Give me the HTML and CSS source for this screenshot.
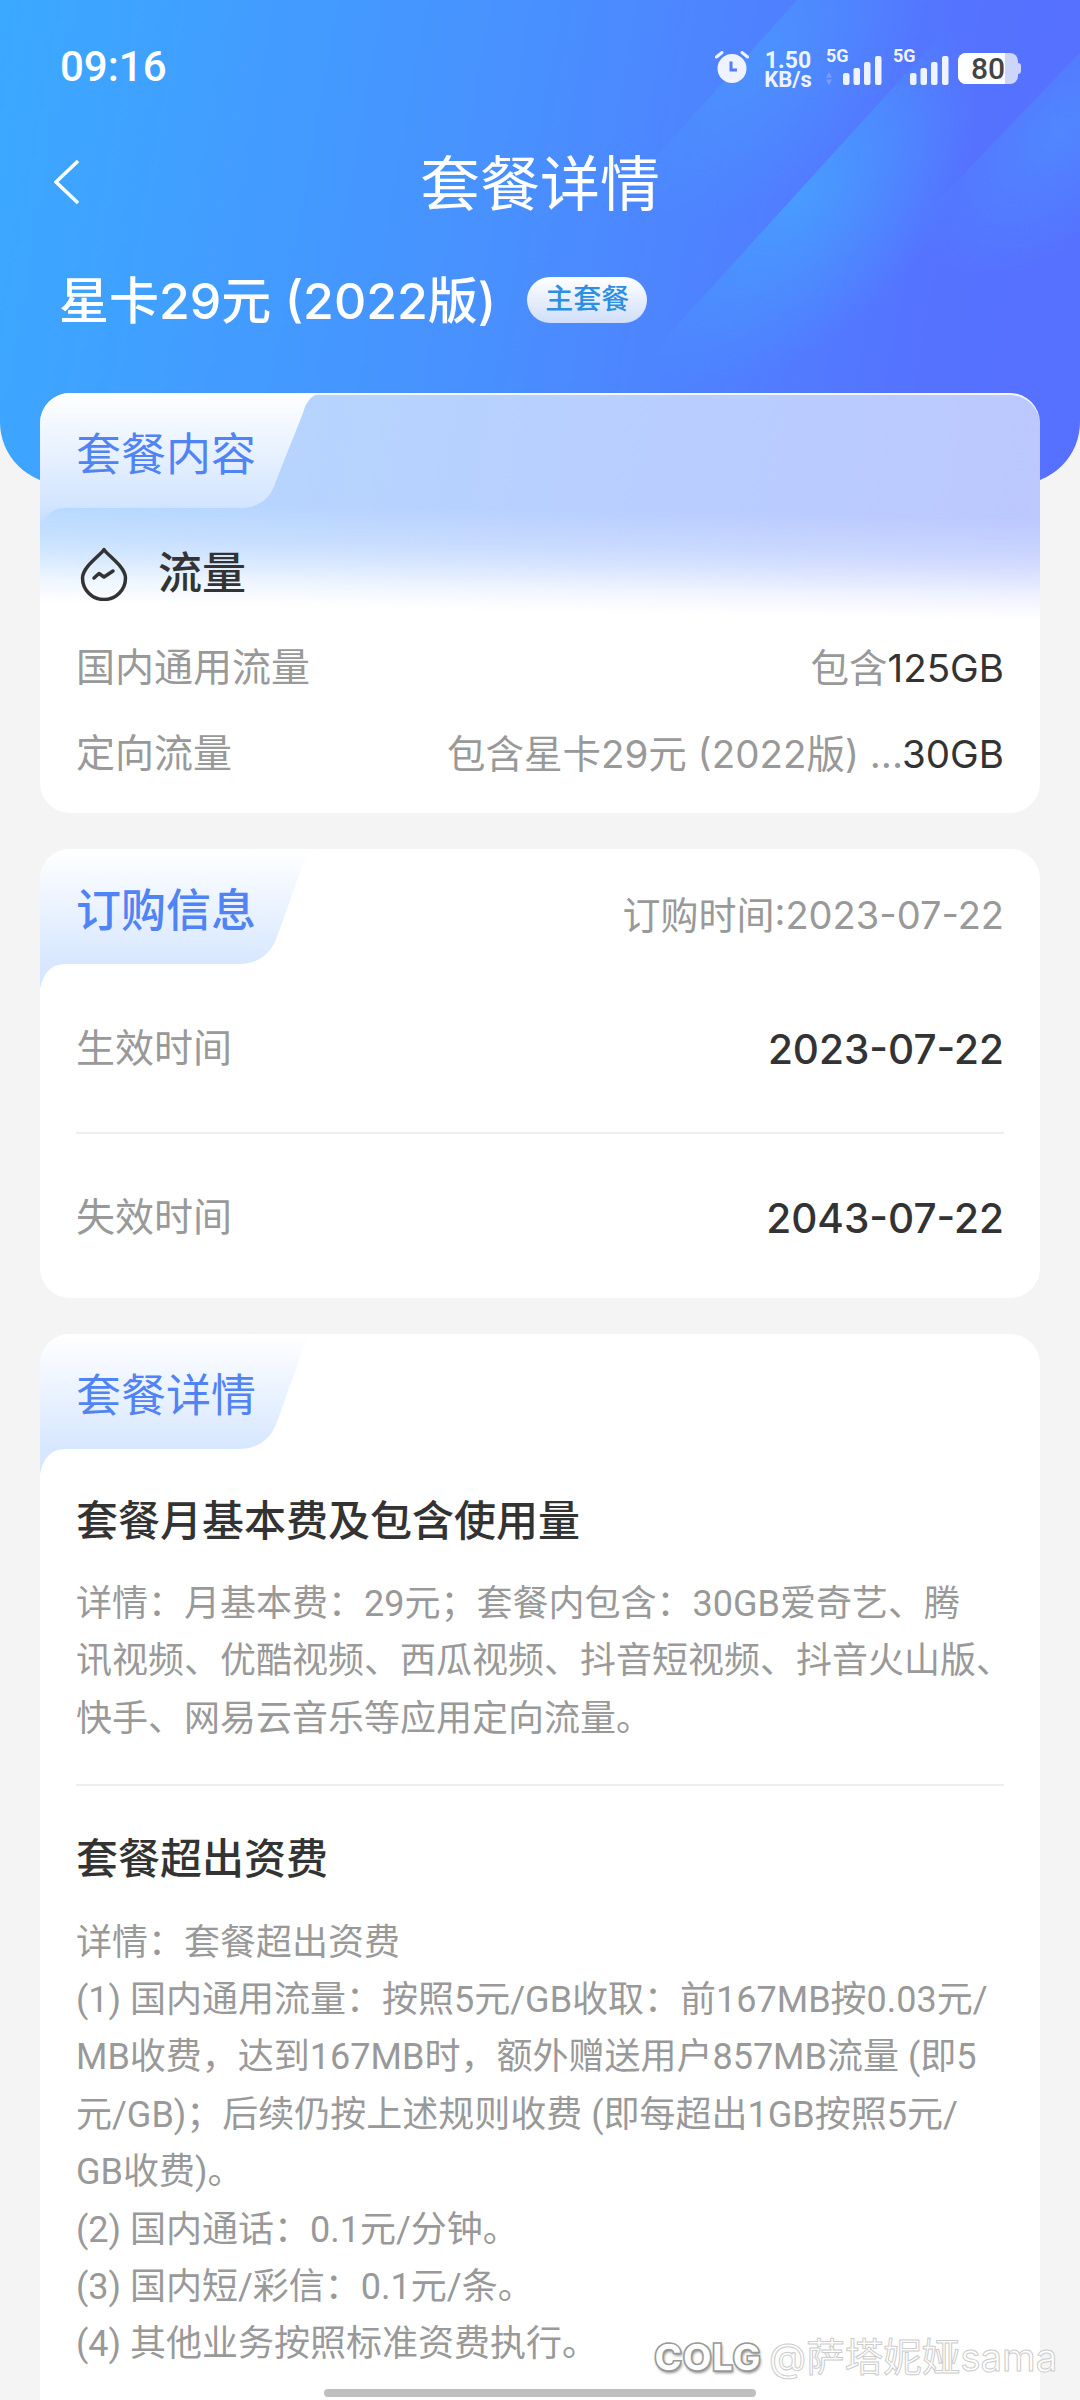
FILE: index.html
```html
<!DOCTYPE html>
<html lang="zh-CN">
<head>
<meta charset="utf-8">
<title>套餐详情</title>
<link rel="stylesheet" href="styles.css">
</head>
<body>
<div class="page">
  <header class="hero">
    <svg class="hero-art" viewBox="0 0 1080 484" aria-hidden="true">
      <defs>
        <radialGradient id="bandA" gradientUnits="userSpaceOnUse" cx="0" cy="0" r="1" gradientTransform="translate(760 50) rotate(-47) scale(200 130)"><stop offset="0" stop-color="#4a9cff" stop-opacity=".6"/><stop offset="1" stop-color="#4a9cff" stop-opacity="0"/></radialGradient>
        <radialGradient id="bandB" gradientUnits="userSpaceOnUse" cx="0" cy="0" r="1" gradientTransform="translate(795 195) rotate(-47) scale(225 135)"><stop offset="0" stop-color="#489cff"/><stop offset=".4" stop-color="#489cff" stop-opacity=".6"/><stop offset="1" stop-color="#489cff" stop-opacity="0"/></radialGradient>
        <radialGradient id="bandC" gradientUnits="userSpaceOnUse" cx="0" cy="0" r="1" gradientTransform="translate(1060 130) rotate(-47) scale(180 100)"><stop offset="0" stop-color="#4a9cff" stop-opacity=".5"/><stop offset="1" stop-color="#4a9cff" stop-opacity="0"/></radialGradient>
      </defs>
      <polygon points="797,0 1200,0 1200,484 500,330" fill="url(#bandA)"/>
      <polygon points="1000,-30 1300,-30 1300,484 560,454" fill="url(#bandB)"/>
      <polygon points="1130,0 1300,0 1300,484 700,450" fill="url(#bandC)"/>
    </svg>
    <div class="status">
      <span class="clock">09:16</span>
      <div class="status-icons">
        <svg class="alarm" viewBox="0 0 34 34" aria-hidden="true">
          <circle cx="17" cy="18.500" r="14.500" fill="#eef3ff"/>
          <path d="M1.500 7 7 2.500M32.500 7 27 2.500" stroke="#eef3ff" stroke-width="3" stroke-linecap="round" fill="none"/>
          <path d="M16 11.500v8.500h6" stroke="#4f7dff" stroke-width="3" fill="none"/>
        </svg>
        <div class="speed"><span class="speed-num">1.50</span><span>KB/s</span></div>
        <div class="sim">
          <span class="net">5G</span>
          <svg class="signal" viewBox="0 0 56 36" aria-hidden="true">
            <path d="M0 27.500 3 22l3 5.500ZM0 29.500 3 35l3-5.500Z" fill="#7d9bff"/>
            <rect x="17" y="23" width="6.500" height="12" rx="2" fill="#eef3ff"/>
            <rect x="27.500" y="18" width="6.500" height="17" rx="2" fill="#eef3ff"/>
            <rect x="38" y="12" width="6.500" height="23" rx="2" fill="#eef3ff"/>
            <rect x="49" y="6" width="6.500" height="29" rx="2" fill="#eef3ff"/>
          </svg>
        </div>
        <div class="sim">
          <span class="net">5G</span>
          <svg class="signal" viewBox="0 0 56 36" aria-hidden="true">
            <rect x="17" y="23" width="6.500" height="12" rx="2" fill="#eef3ff"/>
            <rect x="27.500" y="18" width="6.500" height="17" rx="2" fill="#eef3ff"/>
            <rect x="38" y="12" width="6.500" height="23" rx="2" fill="#eef3ff"/>
            <rect x="49" y="6" width="6.500" height="29" rx="2" fill="#eef3ff"/>
          </svg>
        </div>
        <div class="battery"><span class="battery-fill"></span><span class="battery-num">80</span></div>
      </div>
    </div>
    <nav class="nav">
      <svg class="back" viewBox="0 0 26 46" aria-hidden="true"><path d="M24 2 2 23l22 21" fill="none" stroke="#fff" stroke-width="3.500"/></svg>
      <h1 class="nav-title">套餐详情</h1>
    </nav>
    <div class="plan">
      <span class="plan-name">星卡29元 (2022版)</span>
      <span class="pill">主套餐</span>
    </div>
  </header>

  <main class="cards">
    <section class="card card-usage">
      <svg class="tab" viewBox="0 0 300 140" aria-hidden="true">
        <defs><linearGradient id="tabA" x1="0" y1="0" x2="0" y2="1"><stop offset="0" stop-color="#fff"/><stop offset=".8" stop-color="#d3e5ff"/><stop offset="1" stop-color="#b9d9ff"/></linearGradient></defs>
        <path d="M0 0H285Q268 0 263 20L236 88Q228 115 200 115H25Q5 115 0 140Z" fill="url(#tabA)"/>
      </svg>
      <div class="card-head"><h2 class="card-title">套餐内容</h2></div>
      <div class="usage-head">
        <svg class="drop" viewBox="0 0 48 54" aria-hidden="true">
          <path d="M24 2.500C27 8 45 19 45.500 31A21.500 21.500 0 0 1 2.500 31C3 19 21 8 24 2.500Z" fill="none" stroke="#333" stroke-width="3.500" stroke-linejoin="round"/>
          <path d="M14 31l5-4.500 5 3.500 9-6" fill="none" stroke="#333" stroke-width="3.500" stroke-linecap="round" stroke-linejoin="round"/>
        </svg>
        <span class="usage-name">流量</span>
      </div>
      <div class="usage-row"><span class="muted">国内通用流量</span><span class="muted value">包含<b class="strong">125GB</b></span></div>
      <div class="usage-row"><span class="muted">定向流量</span><span class="muted value">包含星卡29元 (2022版) ...<b class="strong">30GB</b></span></div>
    </section>

    <section class="card card-order">
      <svg class="tab" viewBox="0 0 300 140" aria-hidden="true">
        <defs><linearGradient id="tabB" x1="0" y1="0" x2="0" y2="1"><stop offset="0" stop-color="#fff"/><stop offset=".82" stop-color="#d7e7ff"/></linearGradient></defs>
        <path d="M0 0H280Q267 0 262 18L237 88Q227 115 198 115H25Q5 115 0 140Z" fill="url(#tabB)"/>
      </svg>
      <div class="card-head"><h2 class="card-title heavy">订购信息</h2><span class="muted order-time">订购时间:2023-07-22</span></div>
      <div class="date-row"><span class="muted">生效时间</span><span class="date">2023-07-22</span></div>
      <div class="date-row second"><span class="muted">失效时间</span><span class="date">2043-07-22</span></div>
    </section>

    <section class="card card-detail">
      <svg class="tab" viewBox="0 0 300 140" aria-hidden="true">
        <path d="M0 0H280Q267 0 262 18L237 88Q227 115 198 115H25Q5 115 0 140Z" fill="url(#tabB)"/>
      </svg>
      <div class="card-head"><h2 class="card-title">套餐详情</h2></div>
      <div class="detail first">
        <h3 class="detail-title">套餐月基本费及包含使用量</h3>
        <p class="detail-text">详情&#65306;月基本费&#65306;29元&#65307;套餐内包含&#65306;30GB爱奇艺、腾<br>讯视频、优酷视频、西瓜视频、抖音短视频、抖音火山版、<br>快手、网易云音乐等应用定向流量。</p>
      </div>
      <div class="detail">
        <h3 class="detail-title">套餐超出资费</h3>
        <p class="detail-text">详情&#65306;套餐超出资费<br>(1) 国内通用流量&#65306;按照5元/GB收取&#65306;前167MB按0.03元/<br>MB收费&#65292;达到167MB时&#65292;额外赠送用户857MB流量 (即5<br>元/GB)&#65307;后续仍按上述规则收费 (即每超出1GB按照5元/<br>GB收费)。<br>(2) 国内通话&#65306;0.1元/分钟。<br>(3) 国内短/彩信&#65306;0.1元/条。<br>(4) 其他业务按照标准资费执行。</p>
      </div>
    </section>
  </main>

  <div class="watermark"><span class="wm-logo">COLG</span><span class="wm-text">@萨塔妮娅sama</span></div>
  <div class="home-bar"></div>
</div>
</body>
</html>
```
FILE: styles.css
```css
* { box-sizing: border-box; }
html, body { margin: 0; padding: 0; height: 2400px; overflow: hidden; }
body { background: #f4f4f4; font-family: Roboto, "Noto Sans CJK SC", sans-serif; color: #333; }
h1, h2, h3, p { margin: 0; font-weight: 400; }
b { font-weight: 400; }

.page { position: relative; width: 1080px; height: 2400px; overflow: hidden; }

.hero { position: relative; height: 484px; padding: 0 60px; color: #fff; overflow: hidden;
  border-radius: 0 0 62px 62px;
  background: linear-gradient(100deg, #3ba9ff 0%, #4891ff 45%, #5572ff 85%, #5670ff 100%); }
.hero-art { position: absolute; left: 0; top: 0; width: 1080px; height: 484px; }

.status { position: relative; height: 134px; padding-top: 46px; display: flex; justify-content: space-between; align-items: flex-start; }
.clock { font-size: 42px; line-height: 42px; font-weight: 500; }
.status-icons { display: flex; align-items: flex-start; margin-top: 4px; color: #eef3ff; }
.alarm { width: 34px; height: 34px; flex: none; margin-right: 13px; }
.speed { display: flex; flex-direction: column; align-items: center; width: 52px; margin-right: 12px; font-size: 22px; line-height: 17px; font-weight: 700; }
.speed-num { font-size: 23px; line-height: 21px; }
.sim { position: relative; width: 56px; height: 36px; flex: none; margin-right: 11px; }
.sim + .sim { margin-right: 9px; }
.net { position: absolute; left: 0; top: -3px; font-size: 18px; line-height: 18px; font-weight: 700; }
.signal { position: absolute; left: 0; top: 0; width: 56px; height: 36px; }
.battery { position: relative; width: 60px; height: 31px; flex: none; margin: 3px 2px 0 0; border-radius: 8px; background: #cdd5fb; }
.battery::after { content: ""; position: absolute; right: -3px; top: 10px; width: 3px; height: 11px; border-radius: 0 3px 3px 0; background: #cdd5fb; }
.battery-fill { position: absolute; left: 0; top: 0; bottom: 0; width: 47px; border-radius: 8px 0 0 8px; background: #fff; }
.battery-num { position: absolute; left: 0; top: 0; width: 47px; text-align: right; font-size: 30px; line-height: 31px; font-weight: 500; color: #444; }

.nav { position: relative; height: 100px; display: flex; justify-content: center; align-items: center; }
.back { position: absolute; left: -6px; top: 25px; width: 26px; height: 46px; }
.nav-title { font-size: 60px; line-height: 100px; padding-top: 4px; }

.plan { position: relative; display: flex; align-items: center; height: 64px; margin-top: 35px; gap: 31px; }
.plan-name { font-family: Inter, "Noto Sans CJK SC", sans-serif; font-size: 50px; line-height: 64px; font-weight: 500; margin-left: -1px; }
.pill { width: 120px; height: 46px; margin-top: -3px; border-radius: 23px; text-align: center; font-size: 28px; line-height: 46px; font-weight: 500; color: #2c8fe2;
  background: linear-gradient(180deg, #fff 0%, #cfdefa 100%); }

.cards { display: flex; flex-direction: column; gap: 36px; margin: -91px 40px 0; position: relative; }
.card { position: relative; background: #fff; border-radius: 30px; overflow: hidden; padding: 0 36px; flex: none; }
.card > *:not(.tab) { position: relative; }
.tab { position: absolute; left: 0; top: 0; width: 300px; height: 140px; }
.card-head { height: 122px; display: flex; align-items: flex-start; justify-content: space-between; padding-top: 38px; }
.card-title { font-size: 45px; line-height: 50px; color: #5083f3; }
.card-title.heavy { font-weight: 500; }
.muted { font-size: 39px; line-height: 50px; color: #999; }
.value { font-family: Inter, "Noto Sans CJK SC", sans-serif; font-size: 38.500px; }
.strong { color: #333; }

.card-usage { height: 420px; box-shadow: inset 0 2px 0 rgba(255,255,255,.85);
  background: linear-gradient(181deg, rgba(255,255,255,0) 125px, rgba(255,255,255,.23) 161px, rgba(255,255,255,.4) 177px, rgba(255,255,255,.63) 194px, rgba(255,255,255,.78) 204px, #fff 227px), linear-gradient(100deg, #b4d8ff 0%, #bcc7ff 100%); }
.usage-head { display: flex; align-items: center; height: 62px; margin: 28px 0 20px 4px; gap: 30px; }
.drop { width: 48px; height: 54px; flex: none; }
.usage-name { font-size: 44px; line-height: 62px; font-weight: 500; }
.usage-row { display: flex; justify-content: space-between; align-items: center; height: 86px; }

.card-order { height: 449px; }
.order-time { margin-top: 3px; font-family: Inter, "Noto Sans CJK SC", sans-serif; font-size: 38px; }
.date-row { display: flex; justify-content: space-between; align-items: center; height: 50px; margin-top: 53px; }
.date-row.second { border-top: 2px solid #eee; height: 170px; margin-top: 58px; }
.date { font-family: Inter, "Noto Sans CJK SC", sans-serif; font-size: 40.500px; line-height: 50px; font-weight: 500; color: #333; margin-top: 2px; }

.card-detail { height: 1200px; }
.detail.first { padding-bottom: 35.500px; border-bottom: 2px solid #eee; }
.detail + .detail { padding-top: 43.500px; }
.detail-title { font-size: 42px; line-height: 60px; font-weight: 500; margin-top: 36px; }
.detail + .detail .detail-title { margin-top: 0; }
.detail-text { font-size: 36px; line-height: 57.700px; color: #999; margin-top: 23.500px; white-space: nowrap; }
.detail + .detail .detail-text { line-height: 57.400px; margin-top: 25px; }

.watermark { position: absolute; left: 654px; top: 2334px; display: flex; align-items: center; gap: 8px; height: 46px; font-family: Inter, "Noto Sans CJK SC", sans-serif; }
.wm-logo { font-size: 38px; font-weight: 900; line-height: 46px; color: #fff; -webkit-text-stroke: 1.500px #999; text-shadow: 1px 2px 3px #888; }
.wm-text { font-size: 38.500px; line-height: 46px; color: #fff; -webkit-text-stroke: 1px #ccc; font-weight: 400; }
.home-bar { position: absolute; left: 324px; top: 2389px; width: 432px; height: 8px; border-radius: 4px; background: #bfbfbf; }
```
